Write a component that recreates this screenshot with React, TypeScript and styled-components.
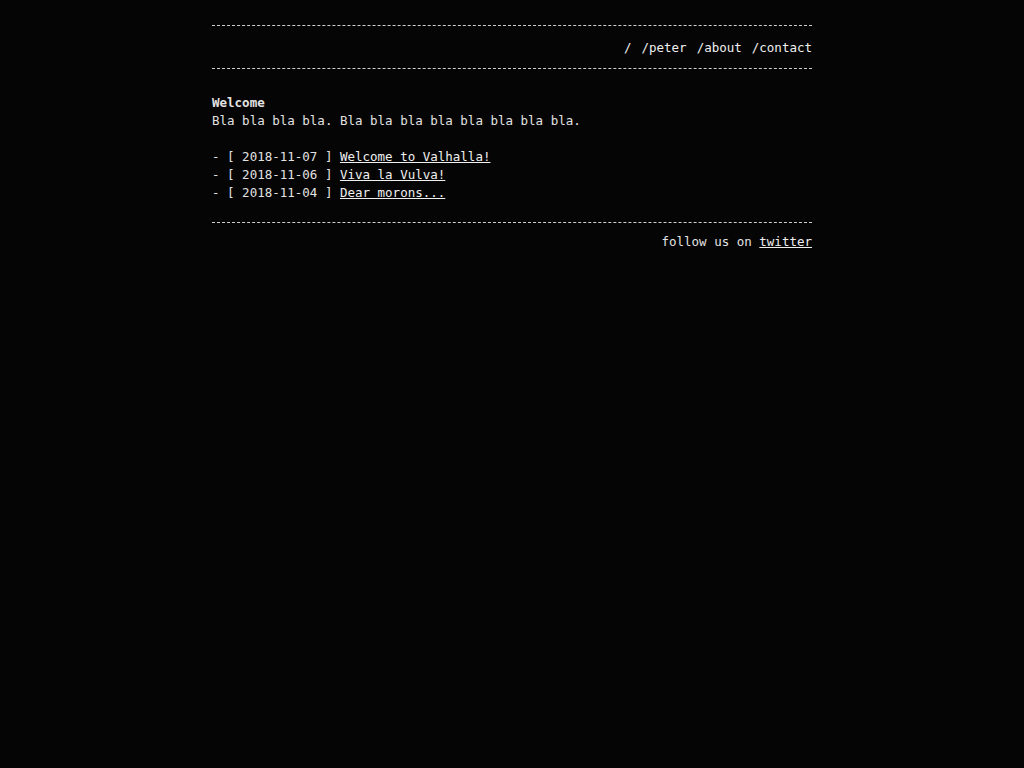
import React from "react";
import styled, { createGlobalStyle } from "styled-components";

const GlobalStyle = createGlobalStyle`
  html, body {
    margin: 0;
    padding: 0;
    background: #050505;
  }
  body {
    color: #e2e2e2;
    font-family: "DejaVu Sans Mono", monospace;
    font-size: 12.5px;
    line-height: 18px;
  }
`;

const Page = styled.div`
  width: 600px;
  margin: 0 auto;
  padding-top: 25px;
`;

const Header = styled.header`
  border-top: 1px dashed #cfcfcf;
  border-bottom: 1px dashed #cfcfcf;
  padding: 13px 0 11px;
`;

const Nav = styled.nav`
  display: flex;
  justify-content: flex-end;
  gap: 10px;
`;

const NavLink = styled.a`
  color: #f0f0f0;
  text-decoration: none;
`;

const Main = styled.main`
  padding: 25px 0 20px;
`;

const Title = styled.div`
  font-weight: bold;
`;

const Intro = styled.p`
  margin: 0 0 18px;
`;

const PostList = styled.ul`
  list-style: none;
  margin: 0;
  padding: 0;
`;

const PostItem = styled.li`
  white-space: pre;
`;

const PostLink = styled.a`
  color: #f0f0f0;
  text-decoration: underline;
`;

const Footer = styled.footer`
  border-top: 1px dashed #cfcfcf;
  padding-top: 10px;
  text-align: right;
`;

const posts = [
  { date: "2018-11-07", title: "Welcome to Valhalla!" },
  { date: "2018-11-06", title: "Viva la Vulva!" },
  { date: "2018-11-04", title: "Dear morons..." },
];

const App: React.FC = () => {
  return (
    <>
      <GlobalStyle />
      <Page>
        <Header>
          <Nav>
            <NavLink href="#">/</NavLink>
            <NavLink href="#">/peter</NavLink>
            <NavLink href="#">/about</NavLink>
            <NavLink href="#">/contact</NavLink>
          </Nav>
        </Header>
        <Main>
          <Title>Welcome</Title>
          <Intro>Bla bla bla bla. Bla bla bla bla bla bla bla bla.</Intro>
          <PostList>
            {posts.map((p) => (
              <PostItem key={p.date}>
                {`- [ ${p.date} ] `}
                <PostLink href="#">{p.title}</PostLink>
              </PostItem>
            ))}
          </PostList>
        </Main>
        <Footer>
          follow us on <PostLink href="#">twitter</PostLink>
        </Footer>
      </Page>
    </>
  );
};

export default App;
